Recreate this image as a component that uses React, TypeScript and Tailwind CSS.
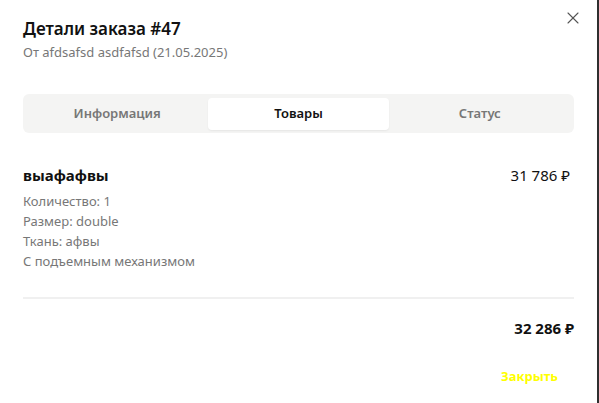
import React from "react";
import { X } from "lucide-react";

const details = [
  "Количество: 1",
  "Размер: double",
  "Ткань: афвы",
  "С подъемным механизмом",
];

const tabs = ["Информация", "Товары", "Статус"];

export default function App() {
  return (
    <div className="flex h-[403px] w-[599px] bg-[#2f2f2f] font-['Noto_Sans',sans-serif]">
      <div className="relative flex w-[597px] flex-col bg-white px-[23px] pt-[16px]">
        <button className="absolute left-[563px] top-[8px] text-[#555]">
          <X size={20} strokeWidth={1.3} />
        </button>

        <h2 className="text-[17px] font-semibold leading-[25px] text-[#111]">
          Детали заказа #47
        </h2>
        <p className="mt-[1px] text-[13px] leading-[20px] text-[#777]">
          От afdsafsd asdfafsd (21.05.2025)
        </p>

        <div className="mt-[32px] grid h-[39px] grid-cols-3 rounded-[6px] bg-[#f4f4f3] p-[3.5px]">
          {tabs.map((t) => (
            <div
              key={t}
              className={
                t === "Товары"
                  ? "flex items-center justify-center rounded-[4px] bg-white text-[13px] font-semibold text-[#111] shadow-[0_1px_2px_rgba(0,0,0,0.06)]"
                  : "flex items-center justify-center text-[13px] font-semibold text-[#777]"
              }
            >
              {t}
            </div>
          ))}
        </div>

        <div className="mt-[31px] flex items-start justify-between">
          <div>
            <div className="text-[15px] font-bold leading-[22px] text-[#111]">
              выафафвы
            </div>
            <div className="mt-[5px] flex flex-col">
              {details.map((d) => (
                <span key={d} className="text-[13px] leading-[20px] text-[#777]">
                  {d}
                </span>
              ))}
            </div>
          </div>
          <div className="mr-[4px] text-[15px] leading-[22px] text-[#111]">31 786 ₽</div>
        </div>

        <div className="mt-[26px] h-[2px] bg-[#f0f0f0]" />

        <div className="mt-[18px] flex justify-end">
          <span className="text-[15px] font-bold leading-[22px] text-[#111]">
            32 286 ₽
          </span>
        </div>

        <div className="mt-[27px] flex justify-end">
          <button className="px-[16px] text-[13px] font-bold leading-[20px] text-[#ffff00]">
            Закрыть
          </button>
        </div>
      </div>
    </div>
  );
}
